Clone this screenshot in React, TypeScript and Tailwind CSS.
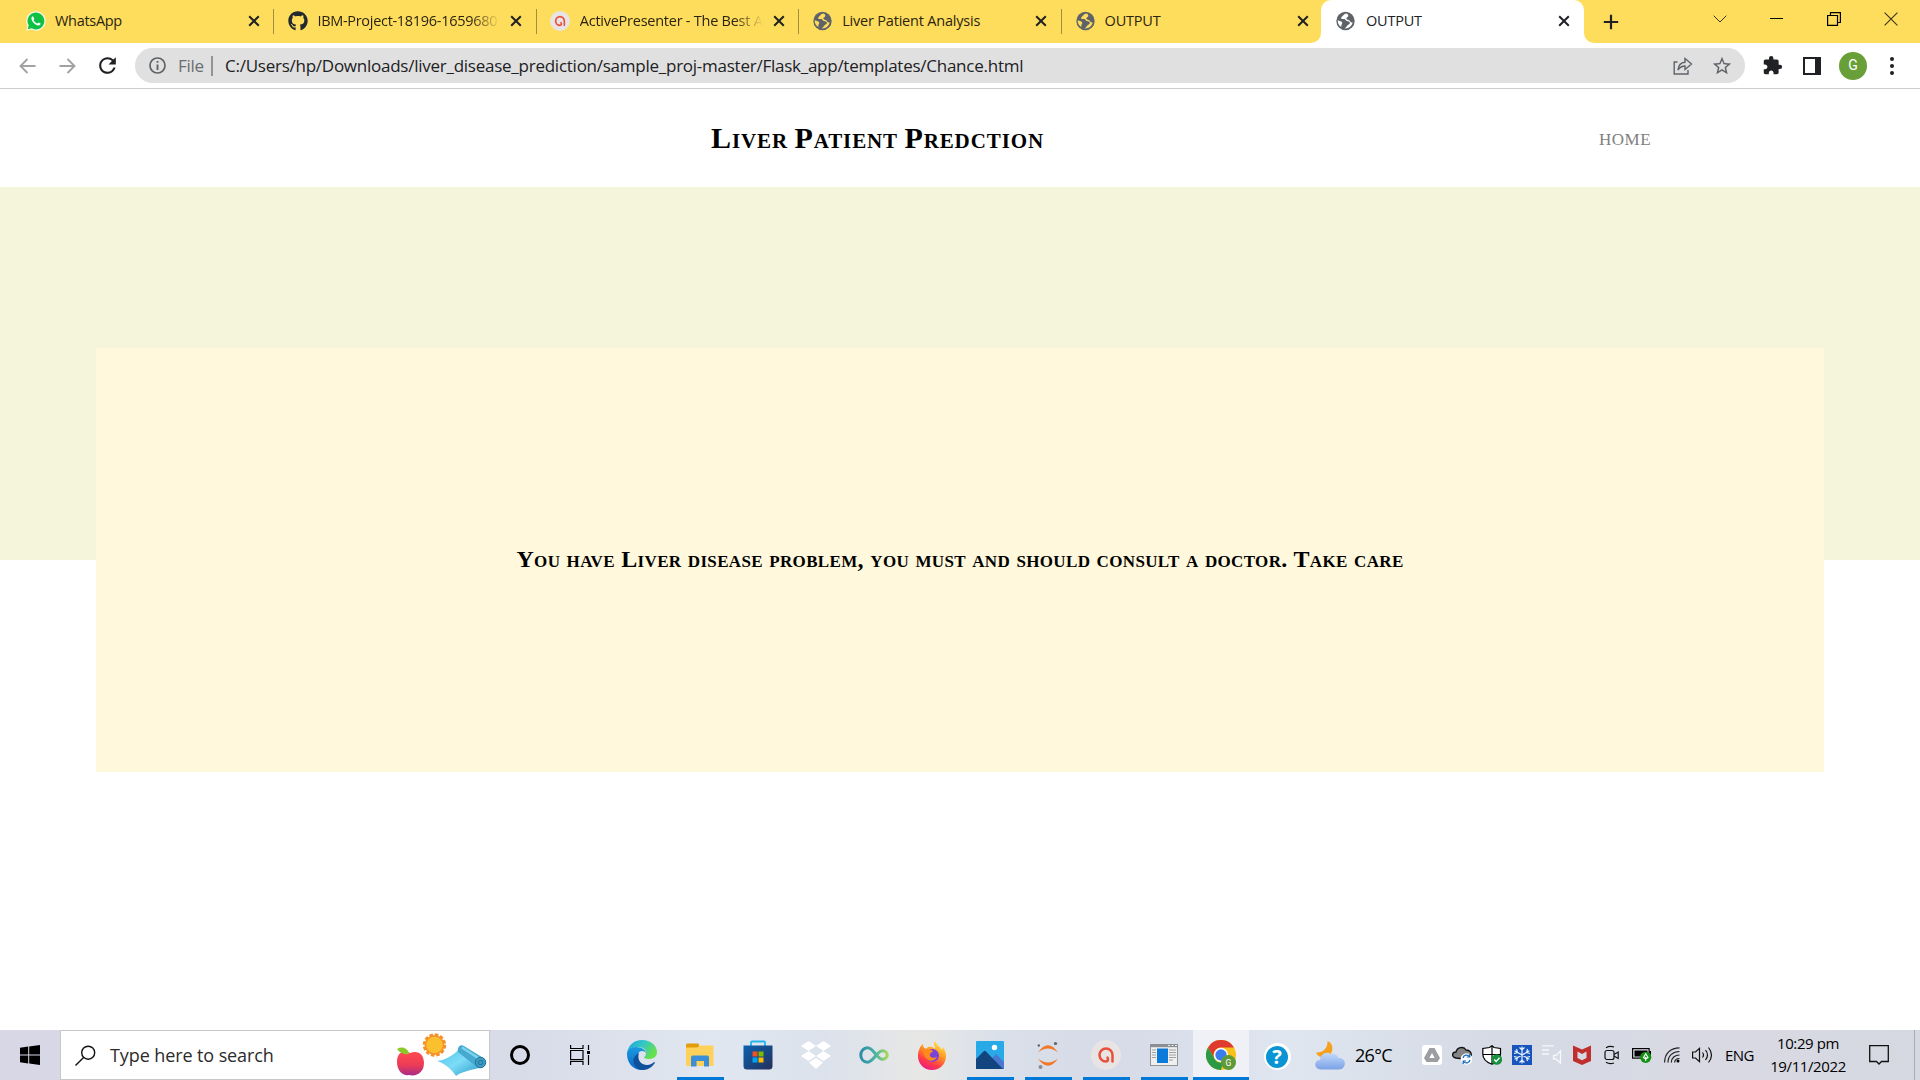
import React from "react";
import { FaGithub } from "react-icons/fa";
import { MdExtension, MdRefresh, MdStarOutline } from "react-icons/md";

const GlobeIcon = ({ hole = "#ffdd5c" }: { hole?: string }) => (
  <svg width="21" height="20" viewBox="0 0 21 20" className="shrink-0">
    <circle cx="10.500" cy="10" r="9.200" fill="#5f6368" />
    <path d="M11.500 2.600C8.500 3 8.500 5 6.500 6.200 5.500 7 6.500 8.300 8 8c1.800-.3 2.500.3 3 1.600.6 1.200 3 .4 3.800 1.800.5 1.200-.8 2-2 2.600-1 .6-1 2.300-3.300 3.400 4 .4 7.500-2.400 8.200-6.200-1.500.6-2.600-.4-3.200-1.600-.8-1.300-3-.5-3.200-2.100-.1-1.500 1.800-1.200 2-2.600.1-1-.6-1.500-1.800-2.300Z" fill={hole} />
    <path d="M2.700 9.200C4.500 10 7 10 7.200 11.600 7.400 13 6 13.600 6.300 16 4 14.500 2.500 12 2.700 9.200Z" fill={hole} />
  </svg>
);

const WhatsAppIcon = () => (
  <svg width="20" height="20" viewBox="0 0 20 20">
    <path d="M.3 19.800 1.500 14.800A9.700 9.700 0 1 1 5.300 18.500Z" fill="#f4f8f0" />
    <path d="M1.800 18.300 2.700 14.300A8.400 8.400 0 1 1 5.600 17.200Z" fill="#0fc143" />
    <path d="M7 5.300c-.5-.1-1.600.7-1.600 2.200 0 2.800 4.200 6.900 7 6.900 1.500 0 2.300-1.100 2.200-1.900l-2.200-1.100-1 1.200C9.700 12 8 10.300 7.500 9l.9-1Z" fill="#fff" />
  </svg>
);

const ActiveIcon = ({ size }: { size: number }) => (
  <svg width={size} height={size} viewBox="0 0 30 30">
    <circle cx="15" cy="15" r="15" fill="#e9e4e4" />
    <path d="M21.500 21.500V15A6.500 6.500 0 1 0 15 21.500C17 21.500 17.500 19.500 16.500 17.500" fill="none" stroke="#e8503c" strokeWidth="2.500" strokeLinecap="round" />
  </svg>
);

const CloseX = () => (
  <svg width="12" height="12" viewBox="0 0 12 12" className="shrink-0">
    <path d="M1.200 1.200 10.800 10.800M10.800 1.200 1.200 10.800" stroke="#202124" strokeWidth="2" />
  </svg>
);

const tabs = [
  { icon: <WhatsAppIcon />, title: "WhatsApp", track: "tracking-[-0.3px]", fade: false },
  { icon: <FaGithub className="size-5 text-[#24292f]" />, title: "IBM-Project-18196-1659680", track: "tracking-[-0.3px]", fade: true },
  { icon: <ActiveIcon size={20} />, title: "ActivePresenter - The Best A", track: "tracking-[-0.25px]", fade: true },
  { icon: <GlobeIcon />, title: "Liver Patient Analysis", track: "tracking-[-0.2px]", fade: false },
  { icon: <GlobeIcon />, title: "OUTPUT", track: "tracking-[-0.2px]", fade: false },
];

function Tab({ icon, title, track, fade, last }: any) {
  return (
    <div className="flex h-[43px] w-[262.400px] shrink-0 items-center pl-[13px]">
      <div className="flex w-[21px] justify-center pb-[1px]">{icon}</div>
      <div className={"ml-[9px] w-[183px] overflow-hidden pb-[2px] whitespace-nowrap text-[14.500px] leading-5 text-[#2a2412] " + track + (fade ? " [mask-image:linear-gradient(to_right,black_84%,transparent)]" : "")}>
        {title}
      </div>
      <div className={(last ? "ml-[9px]" : "ml-[10px]") + " flex pb-px"}><CloseX /></div>
      {!last && <div className="ml-auto h-[25px] w-px bg-[#a38d3e]" />}
    </div>
  );
}

function TabStrip() {
  return (
    <div className="flex h-[43px] items-center bg-[#ffdd5c] pl-[12px]">
      {tabs.map((t, i) => <Tab key={i} {...t} last={i === 4} />)}
      <div className="relative -ml-[3px] flex h-[43px] w-[263px] shrink-0 items-center rounded-t-[10px] bg-white pl-[14px]">
        <div className="absolute bottom-0 -left-[10px] size-[10px] bg-white"><div className="size-full rounded-br-[10px] bg-[#ffdd5c]" /></div>
        <div className="absolute -right-[10px] bottom-0 size-[10px] bg-white"><div className="size-full rounded-bl-[10px] bg-[#ffdd5c]" /></div>
        <div className="pb-[1px]"><GlobeIcon hole="#fff" /></div>
        <div className="ml-[10px] w-[183px] pb-[2px] text-[14.500px] leading-5 tracking-[-0.2px] text-[#202124]">OUTPUT</div>
        <div className="ml-[9px] flex pb-px"><CloseX /></div>
      </div>
      <svg width="16" height="16" viewBox="0 0 16 16" className="ml-[19px]"><path d="M8 .8V15.200M.8 8H15.200" stroke="#202124" strokeWidth="2.200" /></svg>
      <div className="mr-[1px] mb-[6px] ml-auto flex items-center">
        <div className="flex w-[57px] justify-center"><svg width="14" height="8" viewBox="0 0 14 8"><path d="M.7.7 7 7 13.300.7" fill="none" stroke="#3a3318" strokeWidth="1" /></svg></div>
        <div className="flex w-[57px] justify-center"><div className="h-px w-[13px] bg-black" /></div>
        <div className="flex w-[57px] justify-center"><svg width="14" height="14" viewBox="0 0 14 14"><path d="M.6 3.500H10.500V13.400H.6ZM3.500 3.500V.6H13.400V10.500H10.500" fill="none" stroke="#000" strokeWidth="1.200" /></svg></div>
        <div className="flex w-[57px] justify-center"><svg width="14" height="14" viewBox="0 0 14 14"><path d="M.6.6 13.400 13.400M13.400.6.6 13.400" stroke="#3a3318" strokeWidth="1.100" /></svg></div>
      </div>
    </div>
  );
}

function Toolbar() {
  return (
    <div className="flex h-[46px] items-center border-b border-[#cbcbcb] bg-white pl-[19px]">
      <svg width="17" height="16" viewBox="0 0 17 16"><path d="M16.500 8H1.800M8.500 1 1.500 8l7 7" fill="none" stroke="#a0a2a4" strokeWidth="1.900" /></svg>
      <svg width="17" height="16" viewBox="0 0 17 16" className="ml-[23px]"><path d="M.5 8H15.200M8.500 1l7 7-7 7" fill="none" stroke="#a0a2a4" strokeWidth="1.900" /></svg>
      <MdRefresh className="ml-[19px] size-[25px] text-[#202124]" />
      <div className="ml-[15px] flex h-[35px] w-[1610px] items-center rounded-full bg-[#e0e0e0] pl-[14px]">
        <svg width="17" height="17" viewBox="0 0 17 17"><circle cx="8.500" cy="8.500" r="7.500" fill="none" stroke="#5f6368" strokeWidth="1.700" /><path d="M8.500 7.500V13M8.500 4V5.800" stroke="#5f6368" strokeWidth="1.900" /></svg>
        <div className="ml-[12px] w-[27px] text-[17px] leading-6 tracking-[-0.3px] text-[#6a6d71]">File</div>
        <div className="ml-[6px] h-5 w-[2px] bg-[#919396]" />
        <div className="ml-[12px] whitespace-nowrap text-[17px] leading-6 tracking-[-0.250px] text-[#202124]">C:/Users/hp/Downloads/liver_disease_prediction/sample_proj-master/Flask_app/templates/Chance.html</div>
        <svg width="20" height="18" viewBox="0 0 20 18" className="mr-[18px] ml-auto"><path d="M4.500 5H1.200V17H15V13M5 13C5.500 8 8 5.500 12 5.300V1.500L18.500 7 12 12.500V9C9 9 7 10 5 13Z" fill="none" stroke="#5f6368" strokeWidth="1.400" /></svg>
        <MdStarOutline className="mr-[12px] size-[22px] text-[#5f6368]" />
      </div>
      <MdExtension className="ml-[17px] size-[21px] text-[#202124]" />
      <div className="ml-[20px] h-[18px] w-[18px] border-2 border-r-[6px] border-[#202124]" />
      <div className="ml-[18px] flex size-[28px] items-center justify-center rounded-full bg-[#689f38] font-[Roboto] text-[14px] text-white">G</div>
      <div className="ml-[23px] flex flex-col gap-[3px]"><i className="size-[4px] rounded-full bg-[#202124]" /><i className="size-[4px] rounded-full bg-[#202124]" /><i className="size-[4px] rounded-full bg-[#202124]" /></div>
    </div>
  );
}

function PageContent() {
  return (
    <div className="flex h-[941px] flex-col bg-white font-['Liberation_Serif',serif]">
      <div className="flex h-[98px] shrink-0 items-center">
        <h1 className="ml-[711px] w-[888px] text-[30px] leading-9 font-bold tracking-[0.900px] text-black [font-variant:small-caps] [word-spacing:-2px]">Liver Patient Predction</h1>
        <a className="pt-[3px] text-[17px] leading-6 tracking-[0.500px] text-[#808080]">HOME</a>
      </div>
      <div className="h-[373px] shrink-0 bg-[#f5f5dc] px-24 pt-[161px]">
        <div className="flex h-[424px] items-center justify-center bg-[#fff8dc] pb-[2px]">
          <h2 className="text-[24px] leading-7 font-bold tracking-[0.340px] whitespace-nowrap text-black [font-variant:small-caps]">You have Liver disease problem, you must and should consult a doctor. Take care</h2>
        </div>
      </div>
    </div>
  );
}

const SearchArt = () => (
  <svg width="92" height="46" viewBox="0 0 92 46">
    <defs>
      <linearGradient id="apple" x1="0" y1="0" x2="0" y2="1"><stop offset="0" stopColor="#ff4a50" /><stop offset=".55" stopColor="#ee3d55" /><stop offset="1" stopColor="#a92a86" /></linearGradient>
      <linearGradient id="mat" x1="0" y1="0" x2="1" y2="1"><stop offset="0" stopColor="#4fc3e8" /><stop offset=".5" stopColor="#7ddcf8" /><stop offset="1" stopColor="#2a9cc8" /></linearGradient>
    </defs>
    <path d="M15 21C8 17 2 21 2 30s6 14 12 13c8 2 15-3 15-12 0-10-7-13-14-10Z" fill="url(#apple)" />
    <path d="M2 17c5-3 11-1 12 5-5 1-9-1-12-5Z" fill="#8ac926" />
    <circle cx="39.500" cy="13" r="10.400" fill="none" stroke="#f5922a" strokeWidth="2.600" strokeDasharray="3.600 1.840" />
    <circle cx="39.500" cy="13" r="10" fill="#f5922a" /><circle cx="39.500" cy="13" r="8.300" fill="#fbc02d" />
    <path d="M42 29 C50 28 58 24 64 17L84 36C76 38 66 40 61 44C57 38 51 32 42 29Z" fill="url(#mat)" />
    <path d="M63 20C62 14 66 12 69 14L90 27C92 33 88 37 83 36Z" fill="#48a9cf" />
    <path d="M67 15.500 84 26.500" stroke="#7bd4ee" strokeWidth="2.500" />
    <circle cx="85.500" cy="30.500" r="5.200" fill="#3d9ec4" stroke="#216f97" /><circle cx="85.500" cy="30.500" r="2.200" fill="none" stroke="#216f97" />
  </svg>
);

const Cortana = () => <div className="size-[20px] rounded-full border-[3px] border-black" />;

const TaskView = () => (
  <svg width="20" height="20" viewBox="0 0 20 20" fill="none" stroke="#000" strokeWidth="1.200"><path d="M.6 0V3.500H13V0M.6 20V16.500H13V20M.6 5.500H13V14.600H.6ZM18.500 0V5M18.500 10V20" /><rect x="17" y="6" width="3" height="3" fill="#000" stroke="none" /></svg>
);

const Edge = () => (
  <svg width="30" height="30" viewBox="0 0 30 30">
    <defs>
      <linearGradient id="e1" x1="0" x2="1" y1="0" y2=".5"><stop offset="0" stopColor="#1c9fd8" /><stop offset=".5" stopColor="#33c6c8" /><stop offset="1" stopColor="#68e04c" /></linearGradient>
      <linearGradient id="e2" x1="0" x2="0" y1="0" y2="1"><stop offset="0" stopColor="#1b9ae0" /><stop offset="1" stopColor="#0668c4" /></linearGradient>
    </defs>
    <path d="M0 14C1 5 7 0 15 0c9 0 15 6 15 12 0 5-4 7-8 7-3 0-5-1-5-2 0 0 2-1 2-4 0-4-4-6-8-6C5 7 1 10 0 14Z" fill="url(#e1)" />
    <path d="M0 14c0-4 4-7 9-7 6 0 10 3 10 7 0-2-2-3-4-3-4 0-5 5-4 8 2 5 7 8 13 6-3 4-6 5-9 5C6 30 0 23 0 14Z" fill="url(#e2)" />
    <path d="M12 13c-2 6 1 12 8 12 3 0 5-1 7-3 1 0 1 1 0 2-5 7-13 7-17 4-6-5-4-12 2-15Z" fill="#104f9c" />
  </svg>
);

const Explorer = () => (
  <svg width="28" height="24" viewBox="0 0 28 24"><path d="M0 2a1.500 1.500 0 0 1 1.500-1.500h11L14 5H0Z" fill="#e09c0a" /><path d="M0 4.500H11L14 2.500H26.500a1 1 0 0 1 1 1V22a1 1 0 0 1-1 1H1a1 1 0 0 1-1-1Z" fill="#ffd05a" /><path d="M5 23.500V14.500a2 2 0 0 1 2-2H21a2 2 0 0 1 2 2V23.500H18V18H10.500V23.500Z" fill="#3a8fd8" /></svg>
);

const Store = () => (
  <svg width="30" height="30" viewBox="0 0 30 30"><defs><linearGradient id="st" x1="0" y1="0" x2="1" y2="1"><stop stopColor="#0c62b0" /><stop offset="1" stopColor="#24305a" /></linearGradient></defs><path d="M8 6V2.500a1 1 0 0 1 1-1H21a1 1 0 0 1 1 1V6" fill="none" stroke="#22b5ee" strokeWidth="1.800" /><path d="M.5 5.500h29V26a3.500 3.500 0 0 1-3.500 3.500H4A3.500 3.500 0 0 1 .5 26Z" fill="url(#st)" /><path d="M9.500 11.500h5v5h-5Z" fill="#f25022" /><path d="M15.500 11.500h5v5h-5Z" fill="#7fba00" /><path d="M9.500 17.500h5v5h-5Z" fill="#00a4ef" /><path d="M15.500 17.500h5v5h-5Z" fill="#ffb900" /></svg>
);

const Dropbox = () => (
  <svg width="30" height="28" viewBox="0 0 30 28" fill="#fff"><path d="M7.500 0 15 5 7.500 10 0 5ZM22.500 0 30 5 22.500 10 15 5ZM7.500 10 15 15 7.500 20 0 15ZM22.500 10 30 15 22.500 20 15 15ZM15 17 22 21.500 15 28 8 21.500Z" /></svg>
);

const Loop = () => (
  <svg width="30" height="18" viewBox="0 0 30 18"><defs><linearGradient id="inf"><stop stopColor="#2a8fa8" /><stop offset=".55" stopColor="#49b3a5" /><stop offset="1" stopColor="#a4d65a" /></linearGradient></defs><path d="M8.500 1.800C4.500 1.800 1.800 5 1.800 9s2.700 7.200 6.700 7.200C14.500 16.200 18 4.800 23.500 4.800c2.800 0 4.700 1.800 4.700 4.200s-1.900 4.200-4.700 4.200C18 13.200 14.500 1.800 8.500 1.800Z" fill="none" stroke="url(#inf)" strokeWidth="3" /></svg>
);

const Firefox = () => (
  <svg width="28" height="29" viewBox="0 0 28 29"><defs><linearGradient id="ff" x1=".8" y1="0" x2=".3" y2="1"><stop stopColor="#fff04a" /><stop offset=".4" stopColor="#ff9a22" /><stop offset=".75" stopColor="#ff3a48" /><stop offset="1" stopColor="#e8188a" /></linearGradient></defs><path d="M17 0c-3 4 1 5 0 8C14 5 12 6 10 6L8 8C6 8 5 5 5 3 2 5 0 10 0 15c0 8 6 14 14 14s14-6 14-14c0-5-2-7-3-9l-1 3C22 5 18 4 17 0Z" fill="url(#ff)" /><circle cx="14.500" cy="14.500" r="6.500" fill="#7a42dc" /><path d="M3 8c3-1 6 0 8 1 2 0 4 0 4 1s-3 2-3 3c-1 3 3 5 7 3-2 4-7 5-10 2C6 16 6 11 3 8Z" fill="#ff8a1c" /></svg>
);

const Photos = () => (
  <svg width="28" height="28" viewBox="0 0 28 28"><rect width="28" height="28" rx="1" fill="#29aae8" /><path d="M13 21 20 13 28 21V28H13Z" fill="#4a78d0" /><path d="M0 18 8 10Q9 9.500 10 10.500L27 28H0Z" fill="#12457f" /><circle cx="18.500" cy="6.500" r="2.700" fill="#fff" /></svg>
);

const Jupyter = () => (
  <svg width="22" height="28" viewBox="0 0 22 28"><path d="M1 11.500Q11-3 21 11.500Q11 3.500 1 11.500ZM1 17.500Q11 25.500 21 17.500Q11 32 1 17.500Z" fill="#f37726" /><circle cx="18.500" cy="2.500" r="1.600" fill="#616262" /><circle cx="1.800" cy="4.500" r="1.200" fill="#616262" /><circle cx="3.500" cy="26" r="2" fill="#8a8b8b" /></svg>
);

const WindowApp = () => (
  <svg width="28" height="22" viewBox="0 0 28 22"><rect x=".5" y=".5" width="27" height="21" fill="#f0f0f0" stroke="#929292" /><rect width="28" height="3.200" fill="#8a8f94" /><path d="M18 1.500h2M21.500 1.500h2M25 1.500h2" stroke="#eee" /><path d="M2 6h4M2 8.500h4M2 11h4M2 13.500h4M19 6h7M19 8.500h7M19 11h7M19 13.500h7M19 16h4" stroke="#a0a0a0" /><rect x="7" y="4.500" width="11" height="14.500" fill="#0a7bda" /></svg>
);

const Chrome = () => (
  <svg width="30" height="30" viewBox="0 0 30 30"><circle cx="15" cy="15" r="15" fill="#fbc116" /><path d="M2 7.500A15 15 0 0 1 28 7.500H15A7.500 7.500 0 0 0 8.500 18.700Z" fill="#df3a2f" /><path d="M2 7.500 8.500 18.700A7.500 7.500 0 0 0 17 22.200L15 30A15 15 0 0 1 2 7.500Z" fill="#2b9a46" /><circle cx="15" cy="15" r="7.200" fill="#fff" /><circle cx="15" cy="15" r="5.700" fill="#3b7ded" /><circle cx="22.500" cy="22.500" r="7.500" fill="#5f9a38" /><text x="22.500" y="25.500" textAnchor="middle" fontSize="8.500" fontFamily="Roboto, sans-serif" fill="#fff">G</text></svg>
);

const pinned = [
  { icon: <Edge />, open: false }, { icon: <Explorer />, open: true }, { icon: <Store />, open: false },
  { icon: <Dropbox />, open: false }, { icon: <Loop />, open: false }, { icon: <Firefox />, open: false },
  { icon: <Photos />, open: true }, { icon: <Jupyter />, open: true }, { icon: <ActiveIcon size={30} />, open: true },
  { icon: <WindowApp />, open: true },
];

const Weather = () => (
  <svg width="30" height="29" viewBox="0 0 30 29"><defs><linearGradient id="cl" x1="0" y1="0" x2="0" y2="1"><stop stopColor="#c3dafb" /><stop offset="1" stopColor="#7ba2e6" /></linearGradient></defs><path d="M12.500 0C18 2 19 9 15 14 11 18 3 17 1 11.500 8 12 13 7 12.500 0Z" fill="#f5a11f" /><path d="M6 28.500C-2 28-1 19 5 19c1-6 6-9 11-6 3-1 7 1 7 4 9-1 9 11 1 11.500Z" fill="url(#cl)" /></svg>
);

const trayIcons = [
  <svg key="d" width="20" height="20" viewBox="0 0 20 20"><rect width="20" height="20" rx="3" fill="#fff" /><path d="M7.500 3h5l5.500 10-2.500 4H4.500L2 13Z" fill="#9b9da0" /><path d="M10 8 12.700 13H7.300Z" fill="#fff" /></svg>,
  <svg key="o" width="20" height="20" viewBox="0 0 20 20"><path d="M4 13C-1 12 0 7 4 7c1-5 8-6 10-2 4 0 6 3 5 6L12 14Z" fill="#858585" stroke="#111" strokeWidth="1.300" /><circle cx="14.500" cy="14" r="5.800" fill="#fff" /><path d="M11 13a3.700 3.700 0 0 1 6.500-1.500M18 15a3.700 3.700 0 0 1-6.500 1.500M17.800 9v3h-3M11.200 19v-3h3" fill="none" stroke="#1668b8" strokeWidth="1.200" /></svg>,
  <svg key="s" width="20" height="20" viewBox="0 0 20 20"><path d="M10 .7 12 2.500 18.500 3.500V9C18.500 14 15 17.500 10 19.300 5 17.500.8 14 .8 9V3.500L7.500 2.500Z" fill="#fff" stroke="#000" strokeWidth="1.200" /><path d="M10 1V19M1 9.500H18.500" stroke="#000" strokeWidth="1.200" /><circle cx="14.800" cy="14.500" r="5.300" fill="#16913e" /><path d="M12.200 14.500 14.200 16.500 17.500 12.800" fill="none" stroke="#fff" strokeWidth="1.300" /></svg>,
  <svg key="f" width="20" height="20" viewBox="0 0 20 20"><rect width="20" height="20" fill="#1854bd" /><path d="M10 1.500V18.500M2.600 5.800 17.400 14.200M17.400 5.800 2.600 14.200M7.500 2.500 10 5l2.500-2.500M7.500 17.500 10 15l2.500 2.500M2 8.500 5.500 7.500 4.500 4M18 8.500 14.500 7.500 15.500 4M2 11.500 5.500 12.500 4.500 16M18 11.500 14.500 12.500 15.500 16" fill="none" stroke="#e6f1ff" strokeWidth="1.200" /></svg>,
  <svg key="m" width="20" height="20" viewBox="0 0 20 20" fill="none" stroke="#f8f8fa" strokeWidth="1.300"><path d="M0 .8H12M0 5H7M0 9H7M11.500 10.500h2.500l4.500-4.500V18l-4.500-4H11.500Z" /></svg>,
  <svg key="c" width="18" height="20" viewBox="0 0 18 20"><path d="M0 .5 9 4.500 18 .5V16L9 20 0 16Z" fill="#c12f2d" /><path d="M4.500 6.500 9 9l4.500-2.500V13L9 15.300 4.500 13Z" fill="#d6d9e3" /></svg>,
  <svg key="v" width="16" height="20" viewBox="0 0 16 20" fill="none" stroke="#111" strokeWidth="1.200"><rect x="1" y="5.500" width="9" height="9" rx="2" /><path d="M10 9.500 14.200 7V13.500L10 11M2 2.800Q5.500.5 10 2M2 17.200Q5.500 19.500 10 18" /></svg>,
  <svg key="b" width="20" height="16" viewBox="0 0 20 16"><rect x=".6" y="1.600" width="16.500" height="9.500" fill="none" stroke="#000" strokeWidth="1.200" /><path d="M2.500 3.500H15.500V9.500H2.500ZM17.500 4h1.500v4h-1.500Z" /><circle cx="13.700" cy="10.300" r="5.600" fill="#129212" /><path d="M13.700 14V10M11.500 10.500 13.700 6.800 16 10.500 13.700 12Z" fill="none" stroke="#fff" strokeWidth="1.200" /></svg>,
  <svg key="w" width="16" height="16" viewBox="0 0 16 16" fill="none" stroke="#222" strokeWidth="1.200"><path d="M.6 15.500C.6 6 7 .8 15.500.8M4 15.500C4 8.500 9 4.500 15.500 4.500M7.300 15.500C7.300 11 11 8 15.500 8M10.700 15.500c0-2.500 2-4 4.800-4" /><circle cx="14" cy="14" r="1.500" fill="#000" stroke="none" /></svg>,
  <svg key="a" width="21" height="18" viewBox="0 0 21 18" fill="none" stroke="#111" strokeWidth="1.200"><path d="M.6 6H3.500L7.500 2.300V15.700L3.500 12H.6ZM10.500 6.500q2 2.500 0 5M13.500 4q4 5 0 10M16.500 1.500q6 7.500 0 15" /></svg>,
];

function Taskbar() {
  return (
    <div className="flex h-[50px] bg-[linear-gradient(to_right,#d8d7e6_0%,#d8dbe8_27%,#e0e7f0_37%,#dce2ec_43%,#e7e7e5_48%,#dae0ea_52%,#d6dbe7_58%,#dfe6f0_67%,#d5dae5_78%,#d9d9e3_90%,#d5d8e1_100%)] text-black">
      <div className="flex w-[60px] items-center justify-center">
        <svg width="20" height="20" viewBox="0 0 20 20"><path d="M0 2.700 8.200 1.600V9.500H0ZM9.200 1.400 20 0V9.500H9.200ZM0 10.500H8.200V18.400L0 17.300ZM9.200 10.500H20V20L9.200 18.600Z" /></svg>
      </div>
      <div className="flex w-[430px] items-center border border-[#c8c8c8] bg-white pl-[14px]">
        <svg width="21" height="21" viewBox="0 0 21 21" fill="none" stroke="#111" strokeWidth="1.400"><circle cx="13.200" cy="7.700" r="6.500" /><path d="M8.600 12.400.5 20.500" /></svg>
        <div className="ml-[14px] w-[285px] text-[18px] leading-6 tracking-[-0.1px] text-[#2b2b2b]">Type here to search</div>
        <SearchArt />
      </div>
      <div className="flex w-[60px] items-center justify-center"><Cortana /></div>
      <div className="flex w-[60px] items-center justify-center"><TaskView /></div>
      <div className="ml-[3px] flex">
        {pinned.map((p, i) => (
          <div key={i} className="relative flex w-[58px] items-center justify-center">
            {p.icon}
            {p.open && <div className="absolute bottom-0 h-[3px] w-[47px] bg-[#0078d7]" />}
          </div>
        ))}
        <div className="relative flex w-[56px] items-center justify-center bg-[#eff1f6]"><Chrome /><div className="absolute bottom-0 h-[3px] w-full bg-[#0078d7]" /></div>
      </div>
      <div className="flex w-[56px] items-center justify-center pt-[3px]">
        <div className="flex size-[27px] items-center justify-center rounded-full bg-white"><div className="flex size-[22px] items-center justify-center rounded-full bg-[#0a94d4] text-[20px] leading-none font-bold text-white">?</div></div>
      </div>
      <div className="ml-[10px] flex items-center"><Weather /><div className="ml-[10px] w-[62px] text-[18px] tracking-[-0.7px]">26°C</div></div>
      <div className="flex">{trayIcons.map((t, i) => <div key={i} className="flex w-[30px] items-center justify-center">{t}</div>)}</div>
      <div className="flex w-[45px] items-center justify-center text-[15px] tracking-[-0.5px]">ENG</div>
      <div className="flex w-[92px] flex-col items-center pt-[2px] text-[15px] leading-[23px] tracking-[-0.4px] whitespace-nowrap"><div>10:29 pm</div><div>19/11/2022</div></div>
      <div className="flex w-[50px] items-center justify-center"><svg width="20" height="20" viewBox="0 0 20 20"><path d="M.7.7H19.300V16.500H12.500L10 19 7.500 16.500H.7Z" fill="none" stroke="#111" strokeWidth="1.300" /></svg></div>
      <div className="ml-auto w-[6px] border-l border-[#a8abb3]" />
    </div>
  );
}

export default function App() {
  return (
    <div className="flex h-[1080px] w-[1920px] flex-col overflow-hidden bg-white font-['Open_Sans','Noto_Sans',sans-serif]">
      <TabStrip />
      <Toolbar />
      <PageContent />
      <Taskbar />
    </div>
  );
}
